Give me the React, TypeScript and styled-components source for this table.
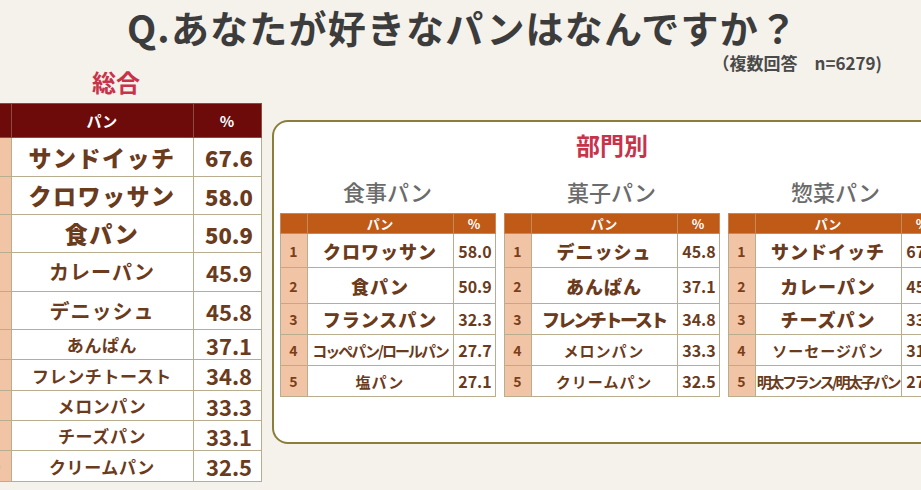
import React from "react";
import styled, { createGlobalStyle } from "styled-components";

const GlobalStyle = createGlobalStyle`
	html, body {
		margin: 0;
		padding: 0;
		background: #f5f2eb;
		overflow: hidden;
	}
	body {
		font-family: "Noto Sans CJK JP", "Noto Sans", sans-serif;
	}
`;

type Size = "xl" | "l" | "m";

type Item = {
	name: string;
	pct: string;
	size: Size;
	spacing?: number;
};

type Category = {
	title: string;
	items: Item[];
};

const overall: Item[] = [
	{ name: "サンドイッチ", pct: "67.6", size: "xl" },
	{ name: "クロワッサン", pct: "58.0", size: "xl" },
	{ name: "食パン", pct: "50.9", size: "xl" },
	{ name: "カレーパン", pct: "45.9", size: "l" },
	{ name: "デニッシュ", pct: "45.8", size: "l" },
	{ name: "あんぱん", pct: "37.1", size: "m" },
	{ name: "フレンチトースト", pct: "34.8", size: "m" },
	{ name: "メロンパン", pct: "33.3", size: "m" },
	{ name: "チーズパン", pct: "33.1", size: "m" },
	{ name: "クリームパン", pct: "32.5", size: "m" },
];

const categories: Category[] = [
	{
		title: "食事パン",
		items: [
			{ name: "クロワッサン", pct: "58.0", size: "xl" },
			{ name: "食パン", pct: "50.9", size: "xl" },
			{ name: "フランスパン", pct: "32.3", size: "xl" },
			{ name: "コッペパン/ロールパン", pct: "27.7", size: "m", spacing: -2 },
			{ name: "塩パン", pct: "27.1", size: "m" },
		],
	},
	{
		title: "菓子パン",
		items: [
			{ name: "デニッシュ", pct: "45.8", size: "xl" },
			{ name: "あんぱん", pct: "37.1", size: "xl" },
			{ name: "フレンチトースト", pct: "34.8", size: "xl", spacing: -2.4 },
			{ name: "メロンパン", pct: "33.3", size: "m" },
			{ name: "クリームパン", pct: "32.5", size: "m" },
		],
	},
	{
		title: "惣菜パン",
		items: [
			{ name: "サンドイッチ", pct: "67.6", size: "xl" },
			{ name: "カレーパン", pct: "45.9", size: "xl" },
			{ name: "チーズパン", pct: "33.1", size: "xl" },
			{ name: "ソーセージパン", pct: "31.0", size: "m" },
			{ name: "明太フランス/明太子パン", pct: "27.4", size: "m", spacing: -2.4 },
		],
	},
];

const overallHeights = [39, 38, 38, 39, 38, 30, 31, 30, 30, 31];
const subHeights = [34, 36, 31, 31, 31];

const Page = styled.div`
	width: 921px;
	height: 490px;
	overflow: hidden;
	color: #6a3b1c;
`;

const Header = styled.header`
	display: flex;
	flex-direction: column;
	align-items: center;
	padding-top: 2px;
`;

const Title = styled.h1`
	margin: 0 0 0 4px;
	font-size: 38px;
	font-weight: 700;
	line-height: 50px;
	letter-spacing: 1.2px;
	color: #3c3c3c;
`;

const Note = styled.div`
	align-self: flex-end;
	margin-right: 39px;
	font-size: 17px;
	font-weight: 700;
	line-height: 22px;
	color: #4a4a4a;
	white-space: pre;
`;

const Main = styled.main`
	display: flex;
	align-items: flex-start;
	gap: 11px;
	margin-top: -10px;
`;

const Overall = styled.section`
	flex: none;
	width: 290px;
	margin-left: -29px;
	display: flex;
	flex-direction: column;
	align-items: center;
`;

const SectionTitle = styled.h2`
	margin: 0;
	font-size: 24px;
	font-weight: 700;
	line-height: 36px;
	color: #c7334b;
`;

const BigTable = styled.table`
	margin-top: 3px;
	width: 290px;
	border-collapse: collapse;
	table-layout: fixed;
	background: #fff;
`;

const BigHead = styled.th`
	height: 33px;
	padding: 0;
	background: #6d0b0b;
	color: #fff;
	font-size: 15px;
	font-weight: 700;
	border: 1px solid #8e4a3e;
`;

const Row = styled.tr<{ $h: number }>`
	height: ${(p) => p.$h}px;
`;

const RankCell = styled.td<{ $small?: boolean }>`
	padding: 0;
	background: #f2c4a6;
	border: 1px solid #b9ad90;
	text-align: center;
	font-size: ${(p) => (p.$small ? 14 : 16)}px;
	font-weight: 700;
	color: #7a3f1a;
`;

const bigName: Record<Size, string> = {
	xl: "font-size: 23px; font-weight: 900; letter-spacing: 1.5px;",
	l: "font-size: 20px; font-weight: 700; letter-spacing: 1px;",
	m: "font-size: 17px; font-weight: 700; letter-spacing: 0.6px;",
};

const NameCell = styled.td<{ $size: Size }>`
	padding: 0;
	border: 1px solid #b9ad90;
	text-align: center;
	white-space: nowrap;
	line-height: 1;
	${(p) => bigName[p.$size]}
`;

const PctCell = styled.td<{ $size: Size }>`
	padding: 0 0 0 4px;
	border: 1px solid #b9ad90;
	text-align: center;
	font-size: 22px;
	font-weight: ${(p) => (p.$size === "xl" ? 900 : 600)};
	line-height: 1;
`;

const Panel = styled.section`
	flex: none;
	box-sizing: border-box;
	width: 681px;
	height: 324px;
	margin-top: 56px;
	padding: 5px 7px 0 6px;
	border: 2px solid #8b7d3a;
	border-radius: 16px;
	background: #fff;
	display: flex;
	flex-direction: column;
	align-items: center;
`;

const Categories = styled.div`
	display: flex;
	gap: 9px;
	margin-top: 8px;
	align-self: stretch;
`;

const CategoryBlock = styled.div`
	width: 215px;
	display: flex;
	flex-direction: column;
	align-items: center;
`;

const CategoryTitle = styled.h3`
	margin: 0;
	font-size: 22px;
	font-weight: 500;
	line-height: 40px;
	color: #6b6b6b;
`;

const SubTable = styled.table`
	margin-top: 2px;
	width: 215px;
	border-collapse: collapse;
	table-layout: fixed;
	background: #fff;
`;

const SubHead = styled.th`
	height: 19px;
	padding: 0;
	background: #c05a17;
	color: #fff;
	font-size: 13px;
	font-weight: 700;
	line-height: 1;
	border: 1px solid #c9875a;
`;

const subName: Record<Size, string> = {
	xl: "font-size: 18px; font-weight: 900;",
	l: "font-size: 17px; font-weight: 700;",
	m: "font-size: 15px; font-weight: 700;",
};

const SubName = styled.td<{ $size: Size; $spacing: number }>`
	padding: 0;
	border: 1px solid #b9ad90;
	text-align: center;
	white-space: nowrap;
	overflow: hidden;
	line-height: 1;
	letter-spacing: ${(p) => p.$spacing}px;
	${(p) => subName[p.$size]}
`;

const SubPct = styled.td`
	padding: 0 0 0 2px;
	border: 1px solid #b9ad90;
	text-align: center;
	font-size: 16px;
	font-weight: 700;
	line-height: 1;
	white-space: nowrap;
`;

const OverallTable = () => (
	<BigTable>
		<colgroup>
			<col style={{ width: 40 }} />
			<col style={{ width: 182 }} />
			<col style={{ width: 68 }} />
		</colgroup>
		<thead>
			<tr>
				<BigHead />
				<BigHead>パン</BigHead>
				<BigHead>%</BigHead>
			</tr>
		</thead>
		<tbody>
			{overall.map((item, i) => (
				<Row key={item.name} $h={overallHeights[i]}>
					<RankCell>{i + 1}</RankCell>
					<NameCell $size={item.size}>{item.name}</NameCell>
					<PctCell $size={item.size}>{item.pct}</PctCell>
				</Row>
			))}
		</tbody>
	</BigTable>
);

const CategoryTable = ({ category }: { category: Category }) => (
	<CategoryBlock>
		<CategoryTitle>{category.title}</CategoryTitle>
		<SubTable>
			<colgroup>
				<col style={{ width: 27 }} />
				<col style={{ width: 146 }} />
				<col style={{ width: 42 }} />
			</colgroup>
			<thead>
				<tr>
					<SubHead />
					<SubHead>パン</SubHead>
					<SubHead>%</SubHead>
				</tr>
			</thead>
			<tbody>
				{category.items.map((item, i) => (
					<Row key={item.name} $h={subHeights[i]}>
						<RankCell $small>{i + 1}</RankCell>
						<SubName $size={item.size} $spacing={item.spacing ?? 1}>
							{item.name}
						</SubName>
						<SubPct>{item.pct}</SubPct>
					</Row>
				))}
			</tbody>
		</SubTable>
	</CategoryBlock>
);

const App: React.FC = () => {
	return (
		<Page>
			<GlobalStyle />
			<Header>
				<Title>Q.あなたが好きなパンはなんですか？</Title>
				<Note>{"（複数回答　n=6279)"}</Note>
			</Header>
			<Main>
				<Overall>
					<SectionTitle>総合</SectionTitle>
					<OverallTable />
				</Overall>
				<Panel>
					<SectionTitle>部門別</SectionTitle>
					<Categories>
						{categories.map((c) => (
							<CategoryTable key={c.title} category={c} />
						))}
					</Categories>
				</Panel>
			</Main>
		</Page>
	);
};

export default App;
